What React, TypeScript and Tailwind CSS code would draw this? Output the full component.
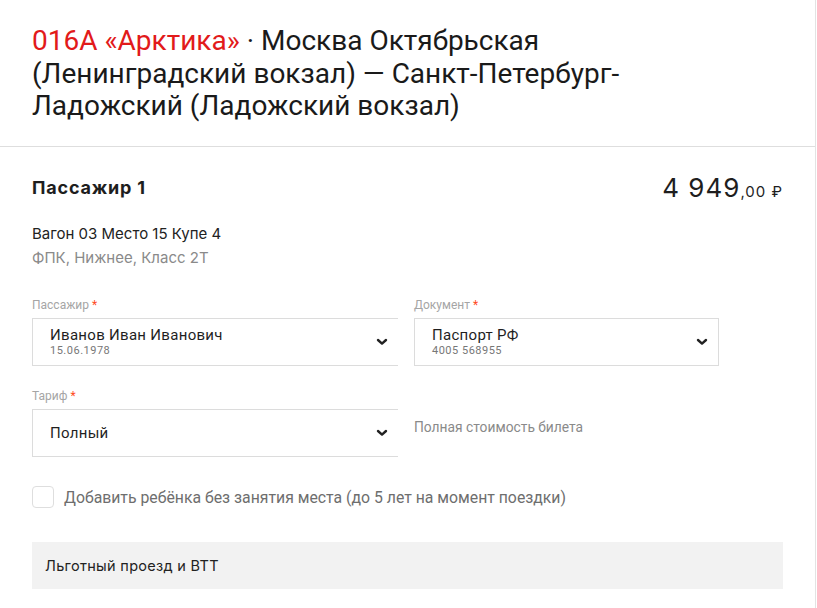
import React from 'react';

const Chevron = () => (
  <svg width="12" height="8" viewBox="0 0 12 8" className="shrink-0 text-[#222]">
    <path d="M2 2 6 5.6 10 2" fill="none" stroke="currentColor" strokeWidth="2.4" strokeLinecap="round" strokeLinejoin="round" />
  </svg>
);

interface SelectProps {
  value: string;
  sub?: string;
  className?: string;
}

const SelectBox: React.FC<SelectProps> = ({ value, sub, className = '' }) => (
  <div className={`h-12 flex items-center justify-between border border-[#dcdcdc] pl-[17px] pr-[10px] ${className}`}>
    <div className="flex flex-col">
      <span className="text-[15px] leading-[18px] text-[#1f1f1f] tracking-[0.3px]">{value}</span>
      {sub && <span className="text-[11px] leading-[14px] text-[#777] tracking-[0.5px]">{sub}</span>}
    </div>
    <Chevron />
  </div>
);

const Label: React.FC<{ text: string }> = ({ text }) => (
  <div className="text-[12px] leading-[14px] text-[#a5a5a5] mb-[6px]">
    {text} <span className="text-[#ff4b1f]">*</span>
  </div>
);

export default function App() {
  return (
    <div className="w-[816px] min-h-[608px] bg-white border-r border-[#e3e3e3] font-['Roboto',sans-serif]">
      <div className="px-8 pt-[25px] pb-[23px] border-b border-[#dedede]">
        <h1 className="text-[28px] leading-[32.5px] text-[#1a1a1a] max-w-[640px]">
          <span className="text-[#e21a1a]">016А «Арктика»</span> · Москва Октябрьская (Ленинградский вокзал) — Санкт-Петербург-Ладожский (Ладожский вокзал)
        </h1>
      </div>

      <div className="px-8 pt-[21px]">
        <div className="flex items-center justify-between">
          <div className="font-['Inter',sans-serif] text-[18px] font-bold tracking-[0.8px] text-[#1e1e1e]">Пассажир 1</div>
          <div className="font-['Inter',sans-serif] text-[#1e1e1e] tracking-[1px]">
            <span className="text-[26px]">4 949</span>
            <span className="text-[15px]">,00 ₽</span>
          </div>
        </div>

        <div className="mt-[15px] text-[15px] leading-[24px] font-['Inter',sans-serif]">
          <div className="text-[#222]">Вагон 03 Место 15 Купе 4</div>
          <div className="text-[#8a8a8a]">ФПК, Нижнее, Класс 2Т</div>
        </div>

        <div className="mt-[28px] grid grid-cols-[366px_305px] gap-x-4 gap-y-[23px]">
          <div>
            <Label text="Пассажир" />
            <SelectBox value="Иванов Иван Иванович" sub="15.06.1978" className="border-r-0" />
          </div>
          <div>
            <Label text="Документ" />
            <SelectBox value="Паспорт РФ" sub="4005 568955" />
          </div>
          <div>
            <Label text="Тариф" />
            <SelectBox value="Полный" className="border-r-0" />
          </div>
          <div className="pt-[28px] text-[13.8px] text-[#8a8a8a]">Полная стоимость билета</div>
        </div>

        <label className="mt-[29px] flex items-center gap-[10px]">
          <span className="w-[22px] h-[22px] rounded-[4px] border border-[#dedede] bg-white" />
          <span className="text-[15.8px] text-[#6e6e6e]">Добавить ребёнка без занятия места (до 5 лет на момент поездки)</span>
        </label>

        <div className="mt-[33px] h-[47px] bg-[#f2f2f2] flex items-center px-[13px] text-[14.5px] tracking-[0.3px] text-[#222] font-['Inter',sans-serif]">
          Льготный проезд и ВТТ
        </div>
      </div>
    </div>
  );
}
